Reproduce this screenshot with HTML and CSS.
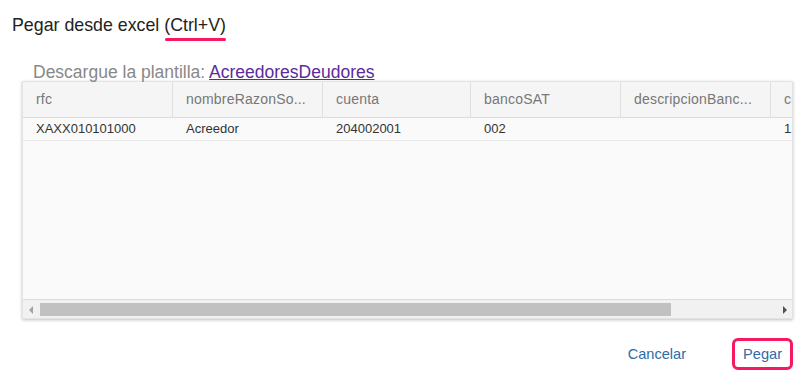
FILE: index.html
```html
<!DOCTYPE html>
<html lang="es">
<head>
  <meta charset="UTF-8">
  <title>Pegar desde excel</title>
  <link rel="stylesheet" href="styles.css">
</head>
<body>

  <div class="dialog">
    <h2 class="dialog-title">Pegar desde excel <span class="shortcut">(Ctrl+V)</span></h2>

    <p class="template">Descargue la plantilla: <a href="#">AcreedoresDeudores</a></p>

    <div class="grid">
      <div class="grid-view">
        <div class="grid-row grid-header">
          <div class="cell">rfc</div>
          <div class="cell">nombreRazonSo...</div>
          <div class="cell narrow">cuenta</div>
          <div class="cell">bancoSAT</div>
          <div class="cell">descripcionBanc...</div>
          <div class="cell">cuentaBancaria</div>
        </div>
        <div class="grid-row">
          <div class="cell">XAXX010101000</div>
          <div class="cell">Acreedor</div>
          <div class="cell narrow">204002001</div>
          <div class="cell">002</div>
          <div class="cell"></div>
          <div class="cell">1234567890</div>
        </div>
      </div>
      <div class="hscroll">
        <span class="arrow arrow-left"></span>
        <div class="track"><div class="thumb"></div></div>
        <span class="arrow arrow-right"></span>
      </div>
    </div>

    <div class="actions">
      <button class="btn">Cancelar</button>
      <button class="btn btn-marked">Pegar</button>
    </div>
  </div>

</body>
</html>
```

FILE: styles.css
```css
body {
  font-family: Arial, "Liberation Sans", sans-serif;
  background-color: #fff;
  margin: 0;
  color: #333;
}

.dialog {
  width: 807px;
  height: 375px;
  padding: 15px 14px 0 22px;
  box-sizing: border-box;
}

.dialog-title {
  font-size: 17.8px;
  font-weight: normal;
  margin: 0 0 0 -10px;
  line-height: 20px;
  color: #222;
}

.shortcut {
  position: relative;
}

.shortcut::after {
  content: "";
  position: absolute;
  left: 1px;
  right: 0;
  bottom: -6px;
  height: 3px;
  border-radius: 2px;
  background: #f7185f;
}

.template {
  margin: 27px 0 -2px 11px;
  font-size: 17.5px;
  line-height: 20px;
  color: #888;
}

.template a {
  color: #5c2a9d;
}

.grid {
  height: 236px;
  margin-top: 1px;
  background: #fafafa;
  border: 1px solid #e4e4e4;
  box-shadow: 0 1px 3px rgba(0,0,0,0.25);
  display: flex;
  flex-direction: column;
  overflow: hidden;
}

.grid-view {
  flex: 1;
  overflow: hidden;
}

.grid-row {
  display: flex;
  height: 22px;
  border-bottom: 1px solid #e8e8e8;
  font-size: 13px;
  white-space: nowrap;
}

.grid-header {
  height: 35px;
  background: #f5f5f5;
  border-bottom-color: #dcdcdc;
  color: #777;
  font-size: 14px;
  letter-spacing: 0.2px;
}

.cell {
  flex: 0 0 150px;
  box-sizing: border-box;
  padding: 0 13px;
  line-height: 22px;
  overflow: hidden;
}

.cell.narrow {
  flex-basis: 148px;
}

.grid-header .cell {
  line-height: 35px;
  border-right: 1px solid #e0e0e0;
}

.hscroll {
  height: 18px;
  border-top: 1px solid #dcdcdc;
  background: #f1f1f1;
  display: flex;
  align-items: center;
}

.track {
  flex: 1;
  height: 13px;
}

.thumb {
  width: 631px;
  height: 13px;
  background: #c1c1c1;
}

.arrow {
  width: 17px;
  height: 13px;
  position: relative;
}

.arrow::before {
  content: "";
  position: absolute;
  top: 3px;
  border-top: 4px solid transparent;
  border-bottom: 4px solid transparent;
}

.arrow-left::before {
  left: 6px;
  border-right: 4px solid #a3a3a3;
}

.arrow-right::before {
  left: 8px;
  border-left: 4px solid #505050;
}

.actions {
  display: flex;
  justify-content: flex-end;
  gap: 35px;
  margin-top: 19px;
}

.btn {
  font-family: Arial, "Liberation Sans", sans-serif;
  font-size: 14.6px;
  color: #2f6aa8;
  background: none;
  border: 3px solid transparent;
  border-radius: 6px;
  padding: 5px 8px;
  cursor: pointer;
}

.btn-marked {
  border-color: #f7185f;
}
```
